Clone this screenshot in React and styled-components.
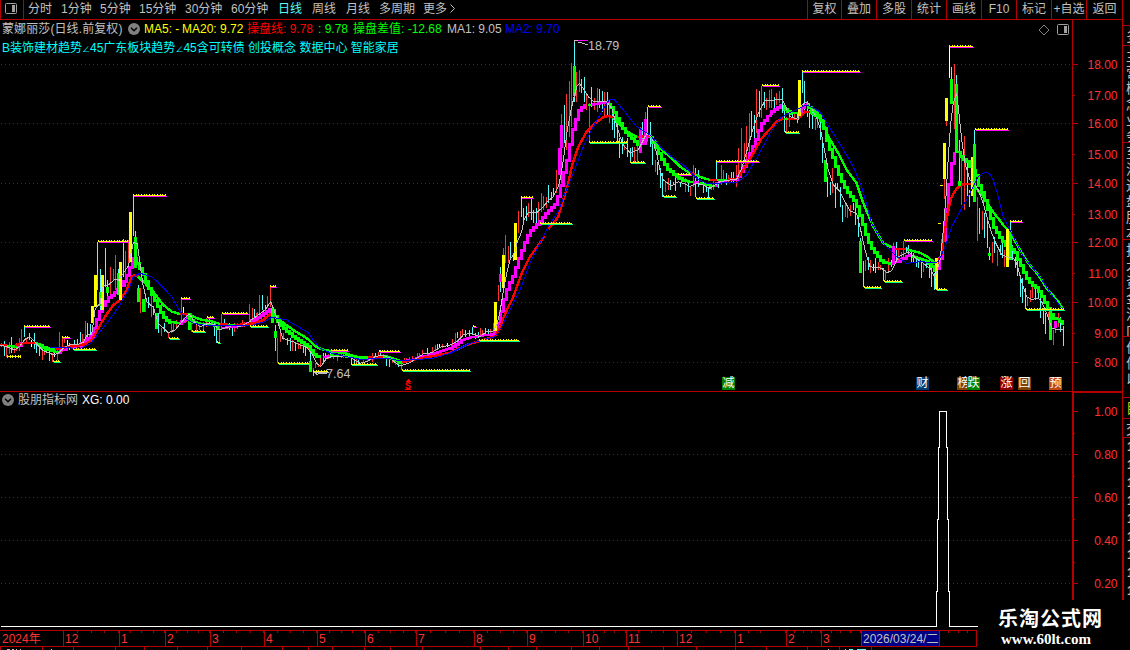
import React from "react"
import styled, { createGlobalStyle } from "styled-components"

const RED = "#b40000"
const COLORS = {
  r: "#ff3232",
  c: "#54fcfc",
  w: "#ffffff",
  y: "#ffff00",
  g: "#00ff00",
  m: "#ff00ff",
  s: "#ff0000",
  b: "#0000e6",
  k: "#c0c0c0",
}

const periods = [
  ["分时", 33],
  ["1分钟", 39],
  ["5分钟", 39],
  ["15分钟", 46],
  ["30分钟", 46],
  ["60分钟", 47],
  ["日线", 34, true],
  ["周线", 34],
  ["月线", 33],
  ["多周期", 44],
  ["更多", 27],
]

const actions = [
  ["复权", 34],
  ["叠加", 35],
  ["多股", 35],
  ["统计", 35],
  ["画线", 35],
  ["F10", 35],
  ["标记", 35],
  ["+自选", 35],
  ["返回", 36],
]

const legend = [
  ["MA5: -", 38, "#ffff00"],
  ["MA20: 9.72", 65, "#ffff00"],
  ["操盘线: 9.78", 71, "#ff0000"],
  [": 9.78", 35, "#00ff00"],
  ["操盘差值: -12.68", 94, "#00ff00"],
  ["MA1: 9.05", 58, "#c0c0c0"],
  ["MA2: 9.70", 60, "#0000ff"],
]

const months = [
  ["2024年", 63],
  ["12", 56],
  ["1", 46],
  ["2", 45],
  ["3", 54],
  ["4", 53],
  ["5", 48],
  ["6", 51],
  ["7", 58],
  ["8", 53],
  ["9", 56],
  ["10", 43],
  ["11", 51],
  ["12", 58],
  ["1", 51],
  ["2", 35],
  ["3", 40],
  ["2026/03/24/二", 78],
  ["", 38],
]

const badges = [
  ["减", 722, "#008000"],
  ["财", 916, "#003c70"],
  ["榜", 957, "#804000"],
  ["跌", 967, "#008000"],
  ["涨", 1000, "#8a0000"],
  ["回", 1018, "#804000"],
  ["预", 1049, "#c04810"],
]

const prices = [
  ["18.00", 64],
  ["17.00", 95],
  ["16.00", 123],
  ["15.00", 154],
  ["14.00", 183],
  ["13.00", 214],
  ["12.00", 242],
  ["11.00", 273],
  ["10.00", 302],
  ["9.00", 333],
  ["8.00", 362],
]

// chart data is stored in thirds of a pixel, relative to a block origin
const A = [0, 180]
const B = [250, 230]
const C = [480, 30]
const D = [690, 50]
const E = [900, 30]

const parse = ([ox, oy], str) =>
  str.split(" ").map(p => {
    const [x, y] = p.split(",").map(Number)
    return [ox + x / 3, oy + y / 3]
  })

// wicks: colour x,high,low
const wicks = [
  [A, "r4,489,500 c13,483,527 r19,500,530 r28,486,522 c34,471,518 r43,500,520 r49,490,512 r58,473,512 r64,447,488 c73,440,470 r79,475,490 c88,459,480 w94,480,500 c103,459,507 c109,492,518 c118,498,528 r127,510,540 r133,510,525 c148,510,543 r157,520,545 w163,515,530 r172,510,540 r178,455,512 r187,475,515 r193,478,490 w202,480,495 c208,488,510 c223,480,500 c232,477,500 c241,456,490 r247,462,490 r256,423,480 c262,430,470 c271,433,465 c292,186,330 c301,267,400 c316,204,320 c322,300,370 r331,261,345 r340,267,300 r346,225,330 c355,267,345 c370,178,290 r376,213,320 r385,180,250 c400,48,168 c406,153,190 c415,315,325 r421,325,400 r436,340,395 c445,350,385 r454,345,410 c460,378,405 c475,400,458 r484,445,468 c493,430,455 r505,455,475 r514,430,460 r520,430,455 r529,420,440 r544,355,435 w550,380,400 r559,405,425 r574,400,455 r589,430,455 r598,430,450 r610,425,455 r619,415,440 c628,418,435 c643,430,467 c649,435,488 r658,435,487 r664,402,450 c673,417,430 c688,430,450 c697,440,468 r703,430,455 r712,430,448 r727,420,435 r733,425,440 r748,373,430 r757,385,425 c763,387,430 r769,400,420"],
  [B, "r7,233,275 c13,237,272 r22,245,262 r28,195,250 c37,195,240 c46,225,245 r52,198,235 r61,172,230 c76,285,362 r82,325,400 r91,303,335 r100,310,330 c112,325,345 c121,325,362 r127,330,362 c136,335,362 r145,340,358 r151,342,356 c160,340,370 c166,345,378 r175,345,360 c181,370,395 r190,415,425 r196,400,415 r205,402,410 r211,385,410 c220,370,395 c226,370,390 r235,372,388 c241,365,385 r250,372,388 r262,375,392 r274,372,385 r280,370,384 c304,380,403 c313,380,400 r319,385,400 c325,385,403 r340,388,400 r352,380,392 r367,368,395 c376,370,385 r385,365,382 c391,360,380 r400,372,385 c409,380,408 c418,385,410 r427,380,400 r436,388,405 c445,400,412 r454,395,420 r463,385,400 r469,385,398 r478,380,400 r487,378,392 r502,370,388 r508,368,380 r517,360,378 c532,355,370 r547,352,366 r556,345,362 c562,342,360 w568,342,355 r577,343,355 w592,338,352 r607,328,345 r616,310,335 c622,305,325 r631,303,325 r637,297,320 c646,300,320 c658,300,318 c667,290,315 c676,308,328 c685,305,325 r691,295,318 r697,300,315 c706,295,315 c715,298,315 r721,298,312 r745,165,213 c751,110,185 r730,280,310 r760,55,78 r766,15,100 r775,48,100 c781,35,85 c790,70,92 r805,0,10"],
  [C, "r115,543,600 c124,503,560 c130,535,572 c139,528,572 r145,520,560 c154,507,570 c160,540,580 c169,535,580 r175,515,580 r184,490,545 r190,497,540 r199,500,535 c205,465,520 c214,487,510 c220,475,500 r229,420,490 r244,252,460 c253,225,340 r259,192,360 r268,153,320 r274,98,290 c283,35,215 r289,125,215 r298,120,185 c304,147,190 c313,140,215 r319,190,240 r328,220,335 c334,170,230 r343,205,240 r352,173,245 c358,178,235 c367,182,245 r373,185,265 c382,187,262 r388,210,280 c397,235,300 c403,260,325 c412,260,335 c418,325,383 c427,320,372 r433,345,360 c442,325,382 c451,355,395 c457,350,380 r463,350,400 r472,345,398 r481,290,370 c487,275,330 r496,245,280 c502,232,320 c511,275,350 c517,330,405 r526,390,425 c532,395,435 c541,415,475 c547,430,500 r556,457,487 r565,443,480 c571,450,480 c580,455,465 c586,445,483 r592,430,450 c601,455,470 r616,445,487 c625,450,487 r631,470,497 r640,405,470 c646,413,500 c655,420,470 c670,455,490 c679,460,485 c685,470,510 r694,465,480 r700,450,480 c709,395,450 c715,450,475 r724,405,465 r730,420,450 c739,430,465 r745,435,460 c754,425,455 c760,425,455 r769,405,470 r775,353,440 r784,295,420 r793,340,400 r799,288,400 r808,248,375 c814,243,320 c823,255,340 r829,178,310 c838,183,260 r844,168,265 c853,185,235"],
  [D, "r229,145,180 r238,120,175 r244,117,175 c253,140,180 r259,128,165 r268,122,158 c277,113,190 c283,165,245 r289,200,245 r298,200,230 c307,183,208 r313,185,205 c322,185,218 c337,65,130 c343,93,180 c352,160,200 c358,180,233 c367,185,238 r376,205,240 r382,205,235 c391,200,270 c397,260,338 c412,380,440 c421,395,435 r427,353,430 c436,400,473 c442,400,420 c451,410,470 c457,465,515 r466,455,500 r472,470,503 r481,465,498 c490,460,480 c496,470,525 c505,488,560 c511,565,575 c520,632,712 r526,630,662 c535,620,660 r541,630,670 w550,642,662 c556,625,670 r565,635,660 r571,645,660 c580,655,692 r586,660,690 r595,625,665 c604,630,650 r610,580,590 c619,575,630 r625,600,630 r634,605,625 r640,573,620 c649,590,610 c655,585,615 c664,605,640 c670,610,640 c679,620,650 c685,625,655 c694,635,683 r700,640,665 c709,635,655 c718,635,685 c724,645,712 c733,670,720 r763,388,445 r769,213,228"],
  [E, "r133,447,507 r139,272,287 w148,50,145 c154,110,148 r163,102,297 c169,135,165 c178,330,460 r184,370,525 r193,318,540 c202,400,498 c208,480,532 c223,300,345 r232,500,632 c238,535,612 r247,543,600 c253,550,625 c262,573,655 c268,650,690 r277,635,700 c283,620,668 r292,660,708 c301,645,675 c307,640,685 r313,660,710 c331,573,605 c337,645,690 c346,680,713 c352,675,738 c361,735,800 c367,745,818 c376,775,838 r382,800,828 r391,780,815 r397,770,805 c406,775,810 c415,780,805 c421,800,865 c430,835,883 c436,850,913 r445,845,870 r460,900,945 r466,895,908 r475,850,890 c481,860,905 c490,888,947"],
]

const bodies = [
  [A, "y277,378,430 y286,285,382 g301,335,378 y307,285,390 g322,320,340 g355,280,345 y361,246,360 y391,96,245 g406,170,263 g415,325,365 g430,357,397 g469,400,447 g568,400,450"],
  [B, "g67,235,280 g76,303,325 g181,393,425 y736,215,302 m751,132,155 y760,75,173 y796,-21,90"],
  [C, "m238,353,435 m244,285,355 g283,108,198 m481,295,370 m496,267,345"],
  [D, "y328,90,198 g406,330,395 g511,573,670 m610,587,645 y739,625,718 y763,280,387 y769,144,213 y754,405,408 y748,519,522"],
  [E, "g154,147,222 g169,162,370 g178,453,467 y217,380,498 g223,343,515 g268,670,678 y322,597,710 g331,603,690 g451,845,930 m466,872,893"],
]

const fast = [
  ["g", A, "8,498 48,500"],
  ["m", A, "50,498 75,488"],
  ["g", A, "105,490 125,497 145,508 165,515 178,515"],
  ["m", A, "178,515 200,503 240,497 262,478 278,465 290,430 300,400 315,370 330,350 345,340 360,325 370,310 382,290 392,265 400,235"],
  ["g", A, "405,235 415,250 428,275 440,300 455,335 470,365 480,385 495,410 510,425 535,430"],
  ["m", A, "540,430 555,418 568,408"],
  ["g", A, "575,420 600,432 645,434 657,445"],
  ["m", A, "665,445 720,437 745,430 760,424"],
  ["m", B, "0,275 25,262 45,250 62,238"],
  ["g", B, "70,240 80,262 95,285 125,312 155,335 175,345 185,360 200,378 212,382"],
  ["m", B, "220,381 240,378"],
  ["g", B, "240,376 290,379 350,388"],
  ["m", B, "350,390 380,381 405,378"],
  ["g", B, "405,378 430,385 455,398"],
  ["m", B, "460,395 500,385 550,372 600,355 640,330 660,322 735,312 745,285 752,260 762,220 772,180 795,130 810,85 830,30 845,0"],
  ["m", C, "155,600 180,578 205,545 230,520 242,480 252,440 265,385 275,330 285,285 300,240 315,225"],
  ["g", C, "323,225 335,226"],
  ["m", C, "335,225 360,220 382,220"],
  ["g", C, "388,222 402,240 420,275 440,305 460,325 480,345"],
  ["m", C, "485,340 505,320"],
  ["g", C, "512,320 530,350 548,385 565,415 590,435 610,450 635,457"],
  ["m", C, "640,458 655,456"],
  ["g", C, "660,460 700,468"],
  ["m", C, "705,464 735,452 770,448 785,425 800,400 812,370 830,330 845,285 870,255"],
  ["m", D, "240,190 255,178 275,165"],
  ["g", D, "280,168 290,180 310,190 325,190"],
  ["m", D, "330,185 340,168 350,163"],
  ["g", D, "352,162 370,180 392,200 405,235 415,275 435,330 455,385 475,425 500,455 515,500 530,550 545,590 560,610 580,635 605,643"],
  ["m", D, "610,640 640,625 660,615"],
  ["g", D, "665,618 700,628 725,640 737,660"],
  ["m", E, "115,715 125,675 135,610 140,545 148,480 155,420 165,370"],
  ["g", E, "168,365 180,365 190,385 205,395 215,410 230,430 238,460 255,500 270,545 285,590 305,625 325,650 345,660 358,690 375,725 390,755 415,775 430,800 445,830 460,860 490,878"],
]

const slow = [
  ["s", A, "0,495 20,497"],
  ["s", A, "45,497 75,488 105,490"],
  ["g", A, "105,490 130,500 165,508"],
  ["s", A, "165,507 210,500 255,493 275,480 295,445 315,410 340,375 360,360 380,330 395,290 405,285 415,290"],
  ["g", A, "415,290 435,310 460,335 490,375 515,395 540,402"],
  ["s", A, "540,402 563,402"],
  ["g", A, "563,403 600,418 640,425 660,432"],
  ["s", A, "660,432 683,433"],
  ["g", A, "683,434 705,435"],
  ["s", A, "705,436 760,430 790,420 815,400"],
  ["g", B, "68,255 75,262 100,278 130,300 160,318 180,332 195,348 215,358 250,365 285,370 320,380 355,383"],
  ["s", B, "355,382 400,380"],
  ["g", B, "400,380 430,388 455,398"],
  ["s", B, "455,397 500,387 550,378 600,368 650,345 700,330 735,318 750,295 760,265 775,230 790,200 815,130 840,80 870,38 883,18"],
  ["s", C, "205,598 235,560 250,510 265,460 275,410 295,350 320,305 345,280 370,262 385,258 400,263"],
  ["g", C, "400,263 425,290 450,310 472,321"],
  ["s", C, "472,321 512,318"],
  ["g", C, "512,318 545,360 570,380 600,410 630,430"],
  ["s", C, "630,430 645,432"],
  ["g", C, "645,432 660,441 690,450"],
  ["s", C, "690,450 712,450"],
  ["g", C, "712,450 740,450"],
  ["s", C, "740,450 770,446 790,420 820,370 845,325 870,297 890,275 910,265"],
  ["g", D, "282,206 294,206"],
  ["s", D, "294,206 325,206 345,185 360,187"],
  ["g", D, "360,187 395,210 415,260 445,310 470,360 500,400 520,460 550,530 580,580 610,594"],
  ["s", D, "615,596 648,596"],
  ["g", D, "650,598 690,608 715,622 735,640"],
  ["s", E, "112,705 125,670 135,600 145,540 155,500 170,475 190,462 218,462"],
  ["g", E, "218,462 250,500 275,540 310,585 335,615 360,660 385,700 415,735 440,775 475,815 490,840"],
]

const average = [
  [A, "0,495 20,500 45,510 60,498 75,478 90,470 110,492 130,512 160,524 175,520 190,505 210,493 235,493 250,487 262,465 275,463 285,390 292,378 300,372 310,315 325,315 345,298 355,300 370,280 385,258 400,188 412,190 418,235 428,310 440,365 460,382 475,430 505,458 525,450 550,420 568,402 585,428 600,440 625,430 645,435 655,450 690,440 700,435 720,440 735,432 750,425"],
  [B, "0,272 25,255 45,240 62,215 72,240 82,270 98,325 130,335 150,345 170,352 185,370 200,400 212,410 230,385 250,378 270,380 290,378 305,385 330,400 350,395 375,380 400,375 420,385 445,405 460,405 480,398 520,372 545,368 570,352 600,345 620,335 640,315 660,310 690,320 710,305 730,303 740,285 750,245 760,185 770,130 780,90 795,65 800,40 815,5"],
  [C, "132,570 145,548 170,548 190,530 205,512 220,500 235,470 242,440 250,390 262,300 275,230 290,170 298,160 310,175 325,200 340,213 380,215 395,235 405,270 420,320 430,345 450,368 475,360 490,330 500,310 515,320 530,370 540,420 550,450 575,468 595,455 610,460 630,470 650,460 670,465 690,475 720,455 750,450 770,448 785,415 800,365 815,310 835,250 855,212"],
  [D, "225,153 275,148 285,165 300,200 325,208 335,165 352,155 365,175 380,205 392,240 405,310 415,360 430,405 450,425 465,455 480,483 500,490 510,530 525,600 540,650 575,655 590,668 605,662 625,620 655,605 675,622 700,640 720,655 735,682"],
  [E, "112,720 120,690 128,620 138,500 145,380 152,280 160,220 170,190 178,260 185,330 195,400 210,450 222,460 235,480 250,520 262,565 275,610 290,645 305,675 320,680 340,685 350,700 365,755 380,800 395,808 415,805 425,815 440,850 455,895 470,898 490,900"],
]

const longAverage = [
  [A, "150,502 240,505 270,493 300,455 335,410 360,375 385,330 400,290 420,280 455,290 485,318 515,350 535,385 555,415 580,430 610,435 750,437"],
  [B, "0,287 45,275 65,262 110,270 145,290 175,308 190,330 210,355 240,368 280,378 330,388 410,385 450,392 550,385 600,370 660,340 735,320 755,290 780,240 810,180 840,100 870,40"],
  [C, "205,590 235,545 255,490 280,430 310,350 340,290 365,245 388,208 402,208 430,240 470,290 510,315 545,355 580,385 610,405 650,445 680,460 770,458 800,435 825,390"],
  [D, "200,325 240,250 270,205 310,182 350,165 390,185 420,235 455,290 490,350 515,410 545,520 580,580 620,620 650,640 690,635 735,638"],
  [E, "105,698 115,695 135,650 155,590 185,535 210,490 235,440 250,430 260,427 270,433 280,450 295,500 310,560 335,610 370,680 420,740 455,795 490,840"],
]

// price boxes: colour x1,x2,y
const bands = [
  [A, "m72,152,440 y22,66,529 m186,212,472 g158,183,545 g218,290,508 m295,388,184 m400,503,46 g507,540,476 m543,572,355 g577,618,455 m622,647,411 g650,662,488 m667,748,400"],
  [B, "g0,56,289 m60,80,169 g85,180,400 k190,238,424 m243,298,361 g304,384,403 m388,453,364 g457,665,421 m668,680,290 g688,810,331"],
  [C, "m124,164,502 g180,278,580 g328,446,337 g451,500,397 m503,545,229 g548,590,499 m595,637,433 g647,704,505 m709,842,394"],
  [D, "m217,272,106 g286,332,247 m337,515,64 g521,575,712 g581,638,694 m642,728,571 g737,773,717"],
  [E, "m147,221,49 m226,327,298 m331,371,574 g377,494,838"],
]

const Bars = ({ data, width }) =>
  data.map(([[ox, oy], str], i) => (
    <g key={i}>
      {str.split(" ").map(item => {
        const [x, top, bottom] = item.slice(1).split(",").map(Number)
        const y1 = Math.round(oy + top / 3)
        const y2 = Math.round(oy + bottom / 3)
        return (
          <rect
            key={item}
            x={ox + Math.floor(x / 3) - (width > 1 ? 1 : 0)}
            y={y1}
            width={width}
            height={Math.max(1, y2 - y1)}
            fill={COLORS[item[0]]}
          />
        )
      })}
    </g>
  ))

const valueAt = (pts, x) => {
  for (let i = 1; i < pts.length; i++) {
    const [x1, y1] = pts[i - 1]
    const [x2, y2] = pts[i]
    if (x <= x2) return y1 + ((y2 - y1) * Math.max(0, x - x1)) / (x2 - x1)
  }
  return pts[pts.length - 1][1]
}

const StepLine = ({ color, pts }) => {
  const end = pts[pts.length - 1][0]
  const cells = []
  for (let x = Math.round(pts[0][0]); x < end; x += 3) {
    const y1 = Math.round(valueAt(pts, x))
    const y2 = Math.round(valueAt(pts, x + 3))
    const dy = Math.abs(y2 - y1)
    cells.push(
      <rect
        key={x}
        x={x}
        y={Math.min(y1, y2) - 1}
        width={3}
        height={dy + (dy > 1 ? 3 : 2)}
        fill={COLORS[color]}
      />
    )
  }
  return <g>{cells}</g>
}

const Line = ({ pts, color, width = 1 }) => (
  <polyline
    points={pts.map(p => p.map(v => v.toFixed(1)).join(",")).join(" ")}
    fill="none"
    stroke={COLORS[color]}
    strokeWidth={width}
  />
)

const Bands = () =>
  bands.map(([[ox, oy], str]) =>
    str.split(" ").map(item => {
      const [a, b, c] = item.slice(1).split(",").map(Number)
      const x = Math.round(ox + a / 3)
      const w = Math.round((b - a) / 3)
      const y = Math.floor(oy + c / 3)
      const under = { m: "#ff00ff", g: "#00ff80", k: "#c0c0c0" }[item[0]]
      return (
        <g key={item}>
          <path
            d={`M${x} ${y - 0.5}h${w - 1}`}
            stroke="#ff0"
            strokeDasharray="1 1.67"
          />
          <rect x={x} y={y} width={w - 1} height={1} fill="#ff0" />
          {under ? (
            <rect x={x + 1} y={y + 1} width={w - 1} height={1} fill={under} />
          ) : (
            <path
              d={`M${x} ${y + 1.5}h${w - 1}`}
              stroke="#ff0"
              strokeDasharray="1 1.67"
            />
          )}
        </g>
      )
    })
  )

const Grid = ({ rows }) =>
  rows.map(y => (
    <path
      key={y}
      d={`M1 ${y + 0.5}H1072`}
      stroke="#a80000"
      strokeDasharray="1 3"
    />
  ))

const PriceChart = () => (
  <Plot width="1072" height="371" viewBox="0 20 1072 371">
    <Grid rows={[64, 123, 183, 242, 302, 362]} />
    <Bars data={wicks} width={1} />
    {fast.map(([c, o, s], i) => (
      <StepLine key={i} color={c} pts={parse(o, s)} />
    ))}
    {slow.map(([c, o, s], i) => (
      <Line key={i} color={c} pts={parse(o, s)} width={2.4} />
    ))}
    <Bars data={bodies} width={3} />
    <Line color="k" pts={average.flatMap(([o, s]) => parse(o, s))} />
    <Line color="b" pts={longAverage.flatMap(([o, s]) => parse(o, s))} />
    <Bands />
    <path d="M575 40.5h13" stroke="#f0f" />
    <path d="M574.5 43v-3h3M578 42.5h4M582 43.5h3M585 44.5h3" fill="none" stroke="#c0c0c0" />
    <path d="M313.5 376v-4h4M314 372l4 3M318 373.5h9" fill="none" stroke="#c0c0c0" />
    <Mark x="588" y="50">18.79</Mark>
    <Mark x="326" y="378">7.64</Mark>
    <path d="M405 382h6l-3-3z" fill="#f00" />
    <Signal x="405" y="389">S</Signal>
    <path d="M405 389.5h6" stroke="#f00" />
  </Plot>
)

const PriceAxis = () => (
  <Plot width="50" height="371" viewBox="1072 20 50 371">
    <path d="M1072.5 20v371" stroke={RED} />
    {prices.map(([label, y], i) => (
      <g key={label}>
        <path d={`M1073 ${y + 0.5}h${i % 2 ? 2 : 5}`} stroke={RED} />
        <AxisText x="1117.5" y={y + 5}>{label}</AxisText>
      </g>
    ))}
  </Plot>
)

const SignalChart = () => (
  <Plot width="1072" height="238" viewBox="0 392 1072 238">
    <Grid rows={[454, 497, 540, 583]} />
    <path
      d="M1 626.5H936.5V591.5H937.5V519.5H938.5V447.5H939.5V411.5H946.5V447.5H947.5V519.5H948.5V591.5H949.5V626.5H978"
      fill="none"
      stroke="#fff"
    />
  </Plot>
)

const SignalAxis = () => (
  <Plot width="50" height="238" viewBox="1072 392 50 238">
    <path d="M1073 392v238M1072 392h50" stroke={RED} strokeWidth="2" />
    {["1.00", "0.80", "0.60", "0.40", "0.20"].map((label, i) => (
      <g key={label}>
        <path
          d={`M1074 ${411.5 + i * 43}h4M1074 ${433.5 + i * 43}h1`}
          stroke={RED}
        />
        <AxisText x="1117.5" y={416 + i * 43}>{label}</AxisText>
      </g>
    ))}
  </Plot>
)

const WindowIcon = ({ color = "#a0a0a0" }) => (
  <svg width="12" height="11" viewBox="0 0 12 11">
    <rect x=".5" y=".5" width="11" height="10" rx="1" fill="none" stroke={color} />
    <rect x="7" y="2" width="3" height="7" fill={color} />
  </svg>
)

const Collapse = () => (
  <svg width="12" height="12" viewBox="0 0 12 12">
    <circle cx="6" cy="6" r="6" fill="#808080" />
    <path d="M3 4.7l3 3 3-3" fill="none" stroke="#000" strokeWidth="1.5" />
  </svg>
)

const App = () => {
  return (
    <>
      <GlobalStyle />
      <Wrapper>
        <Main>
          <Toolbar>
            <MenuButton>
              <WindowIcon />
            </MenuButton>
            <Periods>
              {periods.map(([label, width, active]) => (
                <Period key={label} $width={width} $active={active}>
                  {label}
                </Period>
              ))}
              <svg width="6" height="9" viewBox="0 0 6 9">
                <path d="M.5 .5l4 4-4 4" fill="none" stroke="#c0c0c0" />
              </svg>
            </Periods>
            {actions.map(([label, width]) => (
              <Action key={label} $width={width}>
                {label}
              </Action>
            ))}
          </Toolbar>
          <PricePanel>
            <PriceChart />
            <PriceAxis />
            <Legend>
              <Title>蒙娜丽莎(日线.前复权)</Title>
              <Fold>
                <Collapse />
              </Fold>
              {legend.map(([label, width, color]) => (
                <LegendItem key={label} $width={width} $color={color}>
                  {label}
                </LegendItem>
              ))}
            </Legend>
            <Tags>
              B装饰建材趋势<i>∠</i>45广东板块趋势<i>∠</i>45含可转债 创投概念
              数据中心 智能家居
            </Tags>
            <PanelTools>
              <svg width="12" height="12" viewBox="0 0 12 12">
                <path d="M6 1l5 5-5 5-5-5z" fill="none" stroke="#808080" />
              </svg>
              <WindowIcon />
            </PanelTools>
            {badges.map(([label, left, color]) => (
              <Badge key={label} $left={left} $color={color}>
                {label}
              </Badge>
            ))}
          </PricePanel>
          <SignalPanel>
            <SignalChart />
            <SignalAxis />
            <SignalTitle>
              <Collapse />
              <span>股朋指标网</span>
              <b>XG: 0.00</b>
            </SignalTitle>
          </SignalPanel>
          <TimeAxis>
            {months.map(([label, width], i) => (
              <Month key={i} $width={width} $first={i === 0} $current={i === 17}>
                {label}
              </Month>
            ))}
          </TimeAxis>
          <svg width="978" height="3" viewBox="0 647 978 3">
            <path
              d={[0, 42, 73, 115, 144, 177, 207, 241, 282, 308, 332, 364, 390, 422, 480, 508, 536, 571, 599, 628, 663, 696, 735, 766, 807, 839, 871]
                .map(x => `M${x + 0.5} 647v3`)
                .join("")}
              stroke={RED}
            />
            <path d="M7 649.5h3M12 649.5h2M16 649.5h1M20 649.5h1M51 649.5h1M828 649.5h1M845 649.5h1" stroke="#c0c0c0" />
            <path d="M849 649.5h4M857 649.5h9" stroke="#54fcfc" />
          </svg>
        </Main>
        <Side>
          <SideBlock $height={26} />
          <SideBlock $height={20}>多</SideBlock>
          <SideBlock $height={97}>主营概念业务</SideBlock>
          <SideBlock $height={97}>至流通盘股本</SideBlock>
          <SideBlock $height={97}>技术资金流向</SideBlock>
          <SideBlock $height={61}>价信以</SideBlock>
          <SideBlock $height={21} $color="#c8c800">目</SideBlock>
          <SideBlock $height={19}>交</SideBlock>
          <Ticks>
            {[0, 1, 2, 3, 4, 5, 6, 7, 8].map(n => (
              <span key={n}>1</span>
            ))}
          </Ticks>
        </Side>
        <Watermark>
          <h1>乐淘公式网</h1>
          <p>www.60lt.com</p>
        </Watermark>
      </Wrapper>
    </>
  )
}

const GlobalStyle = createGlobalStyle`
  * {
    box-sizing: border-box;
  }
  body {
    margin: 0;
    background: #000;
    overflow: hidden;
  }
`

const Wrapper = styled.div`
  position: relative;
  display: flex;
  width: 1130px;
  height: 650px;
  overflow: hidden;
  background: #000;
  color: #c0c0c0;
  font-family: "Liberation Sans", "Noto Sans CJK SC", sans-serif;
  font-size: 12px;
  white-space: nowrap;
  svg {
    display: block;
    flex: none;
  }
`

const Main = styled.main`
  width: 1122px;
  flex: none;
`

const Toolbar = styled.header`
  display: flex;
  height: 20px;
  line-height: 19px;
  border-bottom: 1px solid ${RED};
`

const MenuButton = styled.div`
  display: flex;
  width: 24px;
  padding: 3px 0 0 4px;
  border: solid ${RED};
  border-width: 0 1px;
`

const Periods = styled.nav`
  display: flex;
  flex: 1;
  padding-left: 4px;
  svg {
    margin-top: 4px;
  }
`

const Period = styled.span`
  width: ${p => p.$width}px;
  color: ${p => (p.$active ? "#54fcfc" : "#c0c0c0")};
`

const Action = styled.div`
  width: ${p => p.$width}px;
  flex: none;
  border-left: 1px solid ${RED};
  text-align: center;
`

const PricePanel = styled.section`
  position: relative;
  display: flex;
  height: 372px;
  border-bottom: 1px solid ${RED};
`

const SignalPanel = styled.section`
  position: relative;
  display: flex;
  height: 238px;
`

const Plot = styled.svg`
  shape-rendering: crispEdges;
`

const AxisText = styled.text`
  fill: #ff3232;
  font-size: 12px;
  text-anchor: end;
`

const Mark = styled.text`
  fill: #c0c0c0;
  font-size: 12.5px;
`

const Signal = styled.text`
  fill: #f00;
  font: bold 10px "Liberation Mono", monospace;
`

const Legend = styled.div`
  position: absolute;
  top: 0;
  left: 2px;
  display: flex;
  line-height: 18px;
`

const Title = styled.div`
  width: 126px;
  letter-spacing: 0.1px;
`

const Fold = styled.div`
  width: 16px;
  padding-top: 3px;
`

const LegendItem = styled.div`
  width: ${p => p.$width}px;
  color: ${p => p.$color};
`

const Tags = styled.div`
  position: absolute;
  top: 19px;
  left: 2px;
  line-height: 18px;
  color: #00ffff;
  i {
    display: inline-block;
    width: 8px;
    font-size: 8px;
    font-style: normal;
    line-height: 10px;
  }
`

const PanelTools = styled.div`
  position: absolute;
  top: 4px;
  left: 1038px;
  display: flex;
  gap: 7px;
`

const Badge = styled.div`
  position: absolute;
  top: 357px;
  left: ${p => p.$left}px;
  width: 13px;
  height: 13px;
  background: ${p => p.$color};
  color: #fff;
  font-size: 12px;
  line-height: 12px;
  text-align: center;
`

const SignalTitle = styled.div`
  position: absolute;
  top: 1px;
  left: 2px;
  display: flex;
  align-items: center;
  gap: 4px;
  height: 14px;
  line-height: 14px;
  b {
    color: #fff;
    font-weight: normal;
  }
`

const TimeAxis = styled.div`
  display: flex;
  width: 977px;
  height: 17px;
  border: solid ${RED};
  border-width: 1px 1px 1px 0;
`

const Month = styled.div`
  width: ${p => p.$width}px;
  flex: none;
  padding-left: 1px;
  border-left: 1px solid ${p => (p.$first ? "transparent" : RED)};
  color: ${p => (p.$current ? "#c0c0c0" : "#ff3232")};
  line-height: 16px;
  background: ${p =>
    p.$current
      ? "#000084"
      : p.$first
      ? "none"
      : `repeating-linear-gradient(90deg, transparent 0 calc(25% - 1px), ${RED} calc(25% - 1px) 25%) 0 0 / 100% 2px no-repeat`};
`

const Side = styled.aside`
  width: 8px;
  flex: none;
  overflow: hidden;
  border-left: 1px solid ${RED};
`

const SideBlock = styled.div`
  width: 7px;
  height: ${p => p.$height}px;
  padding: 2px 0 0 3px;
  overflow: hidden;
  border-bottom: 1px solid ${RED};
  color: ${p => p.$color || "#c0c0c0"};
  font-size: 14px;
  line-height: 16px;
  white-space: normal;
  word-break: break-all;
`

const Ticks = styled.div`
  display: flex;
  flex-direction: column;
  height: 212px;
  padding-left: 3px;
  border-left: 1px solid ${RED};
  font-weight: bold;
  line-height: 18px;
`

const Watermark = styled.div`
  position: absolute;
  right: 0;
  bottom: 0;
  width: 152px;
  height: 50px;
  padding: 5px 0 0 20px;
  background: #000;
  color: #fff;
  h1 {
    margin: 0;
    font: bold 20px/26px "Noto Sans CJK SC", sans-serif;
    letter-spacing: 1px;
  }
  p {
    margin: 0;
    padding-left: 3px;
    font: bold 15px/17px "Liberation Serif", serif;
  }
`

export default App
